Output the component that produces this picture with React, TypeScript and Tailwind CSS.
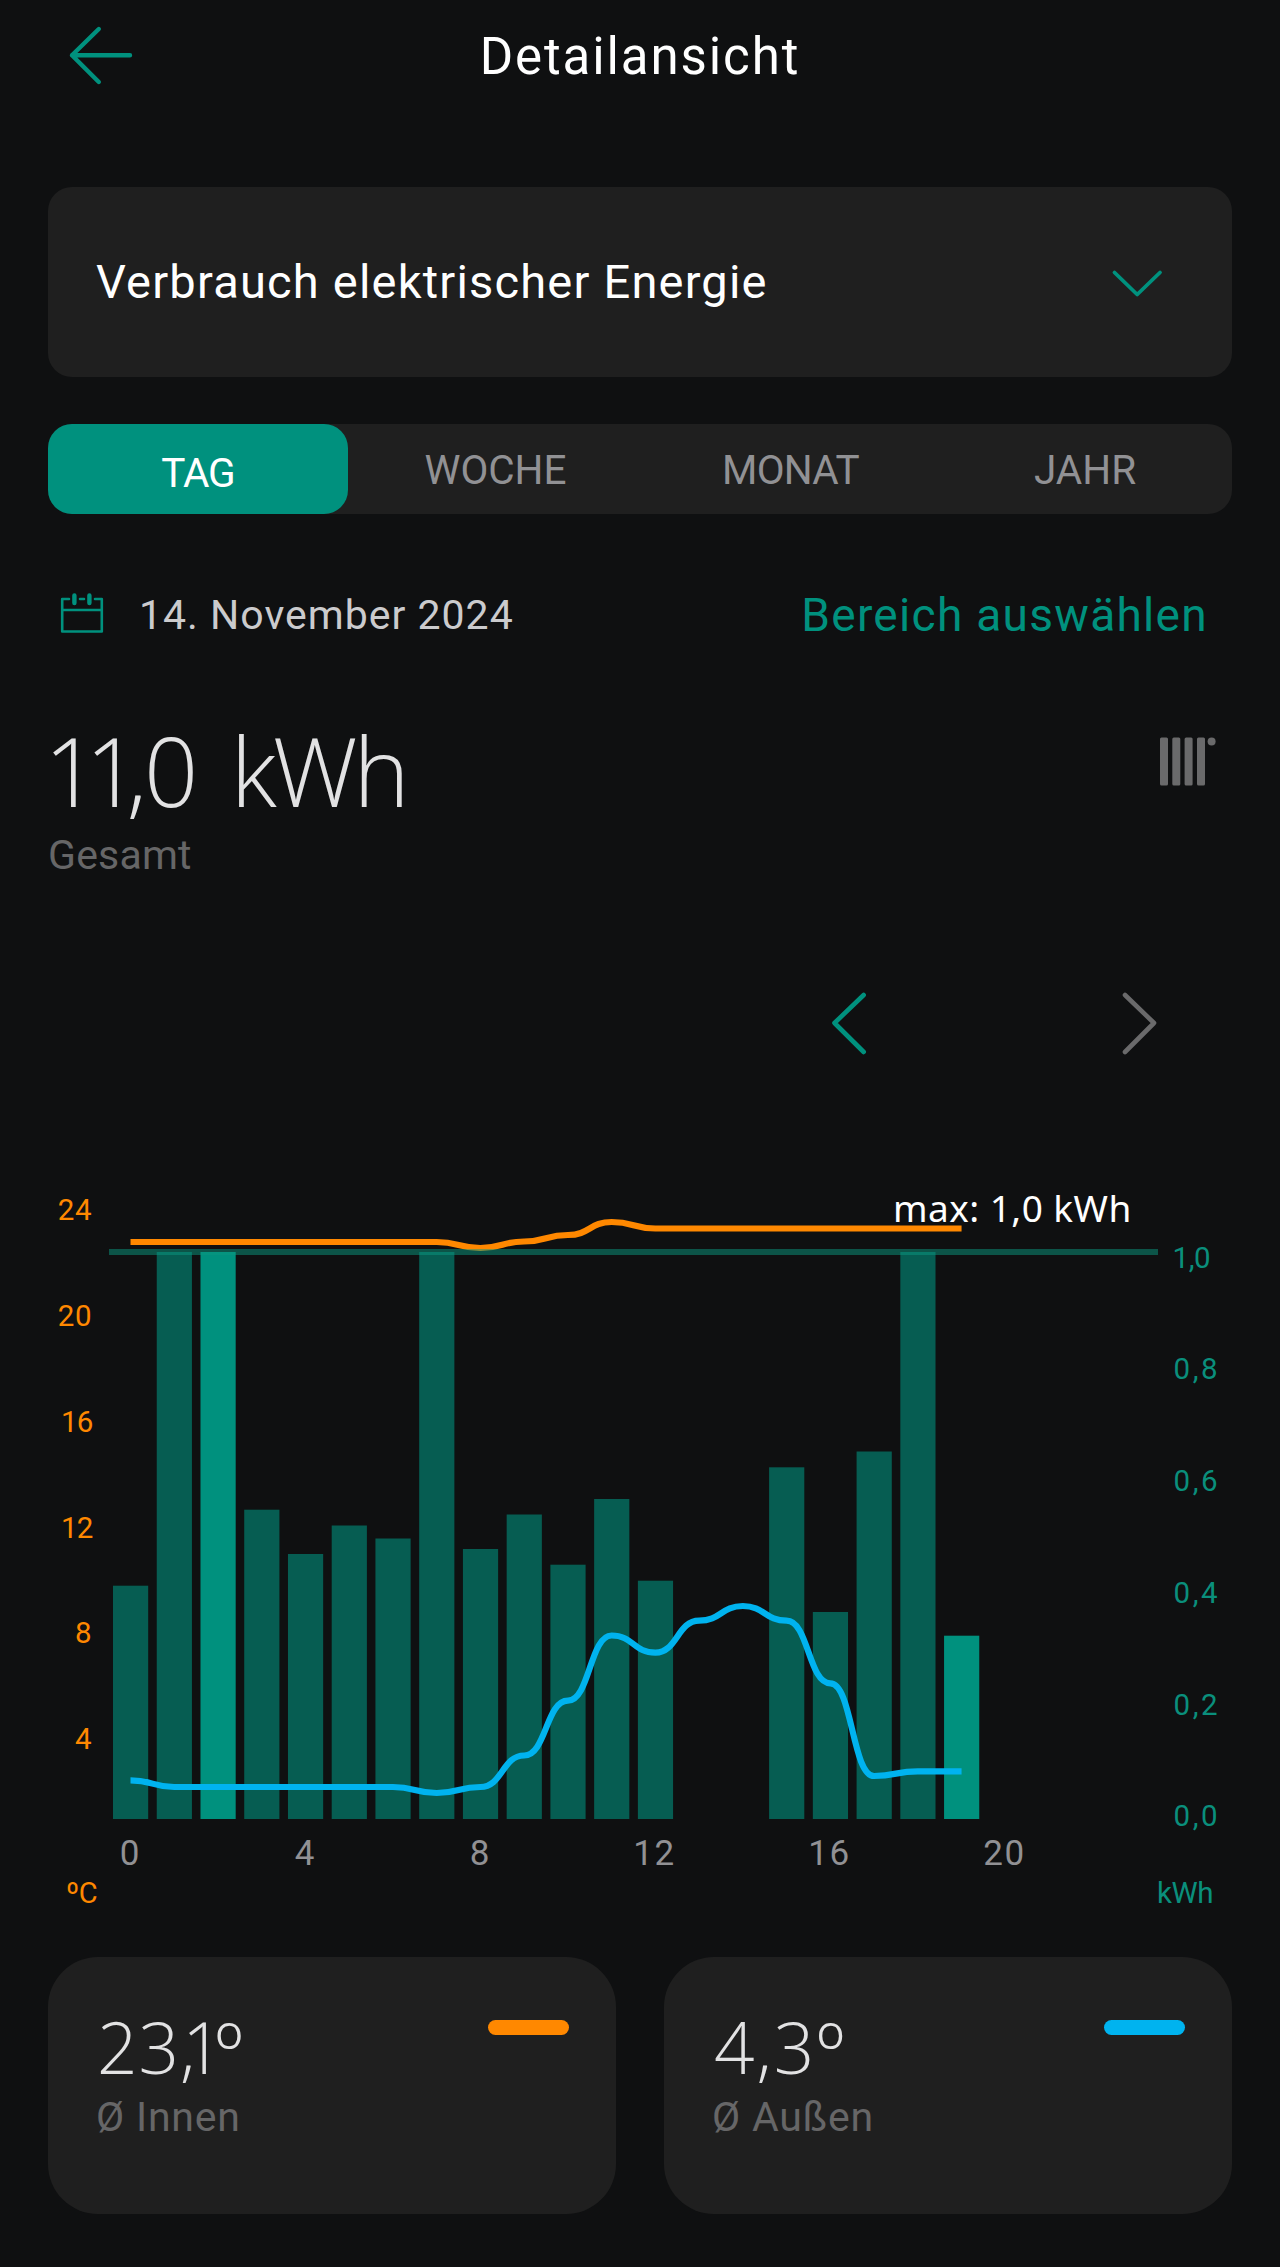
import React from "react";

const GREEN = "#00917e";
const ORANGE = "#ff8800";
const BLUE = "#00b3ef";

const BASE = 1819;
const STEP = 43.74;
const FIRST = 113;

const bars: { hour: number; top: number; active?: boolean }[] = [
  { hour: 0, top: 1585.7 },
  { hour: 1, top: 1252 },
  { hour: 2, top: 1252, active: true },
  { hour: 3, top: 1509.7 },
  { hour: 4, top: 1554 },
  { hour: 5, top: 1525.5 },
  { hour: 6, top: 1538.5 },
  { hour: 7, top: 1252 },
  { hour: 8, top: 1549 },
  { hour: 9, top: 1514.5 },
  { hour: 10, top: 1564.7 },
  { hour: 11, top: 1499 },
  { hour: 12, top: 1580.7 },
  { hour: 15, top: 1467.3 },
  { hour: 16, top: 1612 },
  { hour: 17, top: 1451.5 },
  { hour: 18, top: 1252 },
  { hour: 19, top: 1635.7, active: true },
];

const indoor = [
  1242, 1242, 1242, 1242, 1242, 1242, 1242, 1242, 1248, 1241.5, 1235, 1222,
  1228.5, 1228.5, 1228.5, 1228.5, 1228.5, 1228.5, 1228.5, 1228.5,
];
const outdoor = [
  1780.3, 1787, 1787, 1787, 1787, 1787, 1787, 1793, 1787, 1755.5, 1700.7,
  1635.5, 1652.7, 1620.7, 1606, 1620.7, 1683.3, 1776, 1771.3, 1771.3,
];

// Smooth line whose tangent is horizontal at every hour.
function curve(values: number[]) {
  const x = (i: number) => FIRST + 17.5 + STEP * i;
  return values
    .map((y, i) => {
      if (i === 0) return `M${x(0)} ${y}`;
      const mid = (x(i - 1) + x(i)) / 2;
      return `C${mid} ${values[i - 1]} ${mid} ${y} ${x(i)} ${y}`;
    })
    .join(" ");
}

const leftAxis: [string, number][] = [
  ["24", 1220],
  ["20", 1326],
  ["16", 1431.5],
  ["12", 1537.5],
  ["8", 1643],
  ["4", 1749],
];
const rightAxis: [string, number][] = [
  ["1,0", 1268],
  ["0,8", 1379.3],
  ["0,6", 1491],
  ["0,4", 1603],
  ["0,2", 1714.5],
  ["0,0", 1826],
];
const hours: [string, number][] = [
  ["0", 130.5],
  ["4", 305.5],
  ["8", 480.5],
  ["12", 654.5],
  ["16", 829.5],
  ["20", 1004.5],
];

function Chart() {
  return (
    <svg className="block h-[770px] w-[1280px]" viewBox="0 1160 1280 770">
      {bars.map((b) => (
        <rect
          key={b.hour}
          x={FIRST + STEP * b.hour}
          y={b.top}
          width={35.2}
          height={BASE - b.top}
          fill={b.active ? GREEN : "#065d52"}
        />
      ))}
      <path d={curve(outdoor)} fill="none" stroke={BLUE} strokeWidth={6.2} />
      <path d={curve(indoor)} fill="none" stroke={ORANGE} strokeWidth={6.2} />
      <path d="M109 1252H1158" stroke="#0a9780" strokeOpacity={0.5} strokeWidth={6} />
      <g fontSize={29.5} fill={ORANGE} textAnchor="end">
        {leftAxis.map(([t, y]) => (
          <text key={t} x={92.5} y={y} letterSpacing={t.startsWith("1") ? -0.8 : 0.8}>
            {t}
          </text>
        ))}
      </g>
      <g fontSize={29.5} fill="#0a8f7c">
        {rightAxis.map(([t, y]) => (
          <text key={t} x={t === "1,0" ? 1172.5 : 1173.5} y={y} letterSpacing={t === "1,0" ? -0.4 : 2.6}>
            {t}
          </text>
        ))}
        <text x={1157} y={1902.5} letterSpacing={-0.4}>
          kWh
        </text>
      </g>
      <g fontSize={35} fill="#919194" textAnchor="middle" letterSpacing={1.6}>
        {hours.map(([t, x]) => (
          <text key={t} x={x} y={1864.5}>
            {t}
          </text>
        ))}
      </g>
      <text x={66} y={1902.5} fontSize={29} fill={ORANGE} letterSpacing={-0.4}>
        ºC
      </text>
      <text x={893} y={1222} className="font-['Noto_Sans']" fontSize={37} fill="#fff" letterSpacing={0.45}>
        max: 1,0 kWh
      </text>
    </svg>
  );
}

function Degree() {
  return <span className="relative top-[6px] text-[79px] leading-[60px]">º</span>;
}

function Card({ value, label, pill }: { value: React.ReactNode; label: string; pill: string }) {
  return (
    <div className="flex h-[257px] flex-1 items-start justify-between rounded-[50px] bg-[#1f1f1f] pr-[47px] pl-[48px]">
      <div className="flex flex-col pt-[50px]">
        <div className="h-[80px] font-['Open_Sans'] text-[71px] leading-[80px] font-light whitespace-nowrap text-[#e2e2e3]">
          {value}
        </div>
        <div className="mt-[5px] h-[50px] text-[41px] leading-[50px] tracking-[0.8px] text-[#666667]">{label}</div>
      </div>
      <div className={`mt-[62.5px] h-[15.5px] w-[81px] rounded-full ${pill}`} />
    </div>
  );
}

export default function App() {
  return (
    <div className="flex h-[2267px] w-[1280px] flex-col overflow-hidden bg-[#0f1011] font-['Roboto',sans-serif] text-white">
      <header className="grid h-[187px] shrink-0 grid-cols-[1fr_auto_1fr] items-start">
        <svg className="mt-[23px] ml-[66px] h-[65px] w-[70px]" viewBox="66 23 70 65">
          <path
            d="M130 55.3H72M98.8 29L72 55.3L98.8 82"
            fill="none"
            stroke={GREEN}
            strokeWidth={4.4}
            strokeLinecap="round"
            strokeLinejoin="round"
          />
        </svg>
        <h1 className="h-[114px] text-[51px] leading-[114px] tracking-[1.9px]">Detailansicht</h1>
      </header>

      <div className="mx-[48px] flex h-[190px] shrink-0 items-center justify-between rounded-[24px] bg-[#1f1f1f] pr-[67px] pl-[48px]">
        <span className="pt-px text-[47px] tracking-[1.2px]">Verbrauch elektrischer Energie</span>
        <svg className="mt-[2px] h-[32px] w-[56px]" viewBox="1109 267 56 32">
          <path
            d="M1114.5 272.5L1137.2 294.5L1160 272.5"
            fill="none"
            stroke={GREEN}
            strokeWidth={3.8}
            strokeLinecap="round"
            strokeLinejoin="round"
          />
        </svg>
      </div>

      <div className="mx-[48px] mt-[47px] grid h-[90px] shrink-0 grid-cols-[300px_295px_295px_294px] rounded-[24px] bg-[#1f1f1f] text-center text-[40.5px] leading-[92px] text-[#919194]">
        <div className="h-[90px] rounded-[24px] bg-[#00917e] leading-[98px] tracking-[-1px] text-white">TAG</div>
        <div>WOCHE</div>
        <div className="tracking-[-0.7px]">MONAT</div>
        <div>JAHR</div>
      </div>

      <div className="mt-[71px] flex h-[60px] shrink-0 items-center pr-[72px] pl-[60px]">
        <svg className="-mt-[3px] h-[46px] w-[44px]" viewBox="60 590 44 46">
          <g fill="none" stroke={GREEN} strokeWidth={2.6} strokeLinejoin="round" strokeLinecap="round">
            <path d="M69 598H62.2V630.5H101.8V598H95M80 598H84M62.2 609H101.8" />
            <path d="M74.4 594.5V602M89.4 594.5V602" strokeWidth={4.4} />
          </g>
        </svg>
        <span className="mt-[2px] ml-[35px] text-[41px] tracking-[1px] text-[#cbcbcd]">14. November 2024</span>
        <span className="ml-auto text-[46px] tracking-[1.3px] text-[#00917e]">Bereich auswählen</span>
      </div>

      <div className="mt-[76.5px] flex h-[160px] shrink-0 items-start justify-between pr-[64px] pl-[48px]">
        <div className="flex flex-col">
          <div className="-ml-[4px] h-[96px] font-['Open_Sans'] text-[95px] leading-[96px] font-light whitespace-nowrap text-[#e2e2e3]">
            <span className="tracking-[-13px]">11</span>
            <span className="tracking-[-3px]">,</span>0
            <span className="tracking-[8px]"> </span>
            <span className="tracking-[-4px]">kWh</span>
          </div>
          <div className="mt-[12.5px] h-[50px] text-[41px] leading-[50px] tracking-[0.2px] text-[#666667]">Gesamt</div>
        </div>
        <svg className="mt-[14px] h-[52px] w-[58px]" viewBox="1158 736.5 58 52">
          <g fill="#6a6a6b">
            <rect x="1160" y="738" width="8" height="48" rx="1.5" />
            <rect x="1172.3" y="738" width="8" height="48" rx="1.5" />
            <rect x="1184.6" y="738" width="8" height="48" rx="1.5" />
            <rect x="1197" y="738" width="8" height="48" rx="1.5" />
            <circle cx="1211.6" cy="742" r="4" />
          </g>
        </svg>
      </div>

      <div className="mt-[106px] flex h-[70px] shrink-0 items-center justify-between pr-[120px] pl-[829px]">
        <svg className="h-[70px] w-[40px]" viewBox="829 987.5 40 70">
          <path
            d="M863.7 994.5L834.5 1022.5L863.7 1051.5"
            fill="none"
            stroke={GREEN}
            strokeWidth={4.6}
            strokeLinecap="round"
            strokeLinejoin="round"
          />
        </svg>
        <svg className="h-[70px] w-[40px]" viewBox="1120 987.5 40 70">
          <path
            d="M1125 994.5L1154 1022.5L1125 1051.5"
            fill="none"
            stroke="#6a6a6b"
            strokeWidth={4.6}
            strokeLinecap="round"
            strokeLinejoin="round"
          />
        </svg>
      </div>

      <div className="mt-[102.5px] h-[770px] shrink-0">
        <Chart />
      </div>

      <div className="mt-[27px] flex shrink-0 gap-[48px] px-[48px]">
        <Card
          value={
            <>
              <span className="ml-px tracking-[1px]">23</span>
              <span className="tracking-[-13px]">,</span>
              <span className="tracking-[-8px]">1</span>
              <Degree />
            </>
          }
          label="Ø Innen"
          pill="bg-[#ff8800]"
        />
        <Card
          value={
            <>
              <span className="ml-[2px] tracking-[2px]">4,3</span>
              <Degree />
            </>
          }
          label="Ø Außen"
          pill="bg-[#00b3ef]"
        />
      </div>
    </div>
  );
}
